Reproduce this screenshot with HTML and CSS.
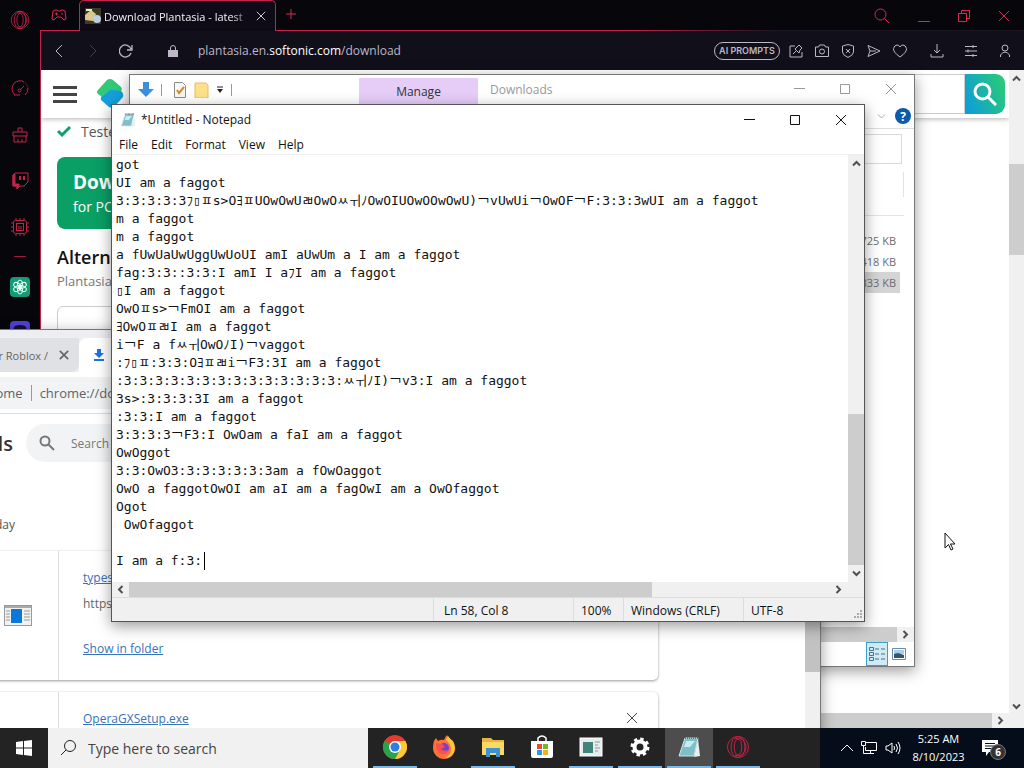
FILE: index.html
```html
<!DOCTYPE html>
<html lang="en">
<head>
  <meta charset="UTF-8">
  <title>Desktop</title>
  <link rel="stylesheet" href="styles.css">
</head>
<body>
  <svg class="defs" width="0" height="0" aria-hidden="true">
    <symbol id="opera" viewBox="0 0 24 24"><circle cx="12" cy="12" r="10.5"/><ellipse cx="12" cy="12" rx="7" ry="10.5"/><ellipse cx="12" cy="12" rx="3.8" ry="8"/><path d="M9 4c6-3 11 3 11 8s-5 11-11 8"/></symbol>
    <symbol id="up" viewBox="0 0 9 9"><path d="M1 6.5l3.500-3.500 3.500 3.500"/></symbol>
    <symbol id="down" viewBox="0 0 9 9"><path d="M1 2.500l3.500 3.500 3.500-3.500"/></symbol>
    <symbol id="left" viewBox="0 0 9 9"><path d="M6.500 1l-3.500 3.500 3.500 3.500"/></symbol>
    <symbol id="right" viewBox="0 0 9 9"><path d="M2.500 1l3.500 3.500-3.500 3.500"/></symbol>
    <symbol id="min" viewBox="0 0 12 12"><path d="M1 5.500h11"/></symbol>
    <symbol id="max" viewBox="0 0 12 12"><path d="M1.500 1.500h9v9h-9z"/></symbol>
    <symbol id="close" viewBox="0 0 12 12"><path d="M1 1l10 10M11 1l-10 10"/></symbol>
    <symbol id="note" viewBox="0 0 24 24"><path d="M8 3h13l-4 18H2z" fill="#7fbfc9" stroke="#cfe6e8"/><path d="M9 6h9l-5 6H7z" fill="#c4eef0" stroke="none"/><path d="M8 3h13" stroke="#65757a" stroke-width="2" stroke-dasharray="1 1"/><path d="M17 22l4-18 2 17z" fill="#e8efef" stroke="none"/></symbol>
    <symbol id="app" viewBox="0 0 28 21"><rect x=".5" y=".5" width="27" height="20" fill="#f2f2f2" stroke="#999"/><path d="M1 2h26" stroke="#aaa" stroke-width="2"/><rect x="7" y="4" width="11" height="14" fill="#0a78d7" stroke="none"/><path d="M2 6h4M2 9h4M2 12h4M2 15h4M20 6h6M20 9h6M20 12h6M20 15h6" stroke="#999"/></symbol>
  </svg>

  <div class="desktop">
    <!-- Opera GX -->
    <div class="opera">
      <aside class="gx-sidebar">
        <a href="#" class="gx-logo"><svg class="i20"><use href="#opera"/></svg></a>
        <a href="#"><svg class="i18" viewBox="0 0 18 18"><path d="M4 15a8 8 0 1 1 10 0" stroke-dasharray="24 1 1 1 1 1 1 1"/><path d="M3 15h6M9 10l4-4"/><circle cx="8.500" cy="10.500" r="1.500"/></svg></a>
        <a href="#"><svg class="i18" viewBox="0 0 18 18"><path d="M7 6V2h4v4M2 6h14v4H2zM3 10v6h12v-6M7 16v-3M11 16v-3"/></svg></a>
        <a href="#"><svg class="i18" viewBox="0 0 18 18"><path d="M2 3l2-2h13v9l-4 4H9l-3 3v-3H2z"/><path d="M2 3v11h4v3l2-3v-2H4V2z" fill="#c42248"/><path d="M9 4v4M13 4v4" stroke-width="2"/></svg></a>
        <a href="#"><svg class="i18" viewBox="0 0 18 18"><rect x="2.500" y="2.500" width="13" height="13" rx="2"/><rect x="5.500" y="5.500" width="7" height="7"/><path d="M5 0v2M9 0v2M13 0v2M5 16v2M9 16v2M13 16v2M0 5h2M0 9h2M0 13h2M16 5h2M16 9h2M16 13h2M8 8v3M10 8v3"/></svg></a>
        <hr>
        <a href="#" class="gpt"><svg class="i16" viewBox="0 0 16 16"><ellipse cx="8" cy="5" rx="2.500" ry="4"/><ellipse cx="8" cy="5" rx="2.500" ry="4" transform="rotate(60 8 8)"/><ellipse cx="8" cy="5" rx="2.500" ry="4" transform="rotate(120 8 8)"/><ellipse cx="8" cy="5" rx="2.500" ry="4" transform="rotate(180 8 8)"/><ellipse cx="8" cy="5" rx="2.500" ry="4" transform="rotate(240 8 8)"/><ellipse cx="8" cy="5" rx="2.500" ry="4" transform="rotate(300 8 8)"/></svg></a>
        <a href="#" class="discord"><svg class="i16" viewBox="0 0 16 16"><path d="M1 13C0 8 2 4 3 3q5-2 10 0c1 1 3 5 2 10z" fill="#151033" stroke="none"/><circle cx="5.500" cy="8" r="1.500" fill="#bbb" stroke="none"/><circle cx="10.500" cy="8" r="1.500" fill="#bbb" stroke="none"/></svg></a>
      </aside>
      <div class="gx-main">
        <div class="gx-tabs">
          <svg class="gx-pad" viewBox="0 0 16 12"><path d="M4 1h2l1 1h2l1-1h2l2 1 1 8-2 1-3-3H6l-3 3-2-1L2 2z"/><path d="M4 5h3M5.500 3.500v3M10 5h2"/></svg>
          <div class="gx-tab">
            <svg class="i16" viewBox="0 0 16 16"><path d="M0 0h16v16H0z" fill="#3d3b22" stroke="none"/><path d="M0 7l6-5 5 4-3 7-8-1z" fill="#d9c98c" stroke="none"/><path d="M1 1h6v2H1z" fill="#e8e8c8" stroke="none"/><circle cx="12" cy="11" r="4" fill="#b8cfe4" stroke="none"/></svg>
            <span>Download Plantasia - latest</span>
            <button aria-label="Close tab"><svg class="i10"><use href="#close"/></svg></button>
          </div>
          <button class="gx-new" aria-label="New tab"><svg class="i10" viewBox="0 0 10 10"><path d="M5 0v10M0 5h10"/></svg></button>
          <div class="gx-win">
            <svg class="i16" viewBox="0 0 16 16"><circle cx="6.500" cy="6.500" r="5.500"/><path d="M10.500 10.500L15 15"/></svg>
            <svg class="i12" viewBox="0 0 12 12"><path d="M0 11.500h12"/></svg>
            <svg class="i12" viewBox="0 0 12 12"><path d="M.5 3.500h8v8h-8zM3.500 3.500v-3h8v8h-3"/></svg>
            <svg class="i12"><use href="#close"/></svg>
          </div>
        </div>
        <div class="gx-bar">
          <button aria-label="Back"><svg class="i14" viewBox="0 0 14 14"><path d="M9 1L3 7l6 6"/></svg></button>
          <button aria-label="Forward" disabled><svg class="i14" viewBox="0 0 14 14"><path d="M4 1l6 6-6 6"/></svg></button>
          <button aria-label="Reload"><svg class="i14" viewBox="0 0 14 14"><path d="M12 9a6 6 0 1 1 0-4M13 1v5H8" stroke-width="1.300"/></svg></button>
          <svg class="lock" viewBox="0 0 10 12"><path d="M2.500 5V3a2.500 2.500 0 0 1 5 0v2"/><path d="M0 5h10v7H0z" fill="#bdb7c8" stroke="none"/></svg>
          <span class="url">plantasia.en.<b>softonic.com</b>/download</span>
          <div class="gx-tools">
            <button class="ai">AI PROMPTS</button>
            <svg class="i14" viewBox="0 0 14 14"><path d="M6 2H1v11h12V8M4 10l3-3M6 5l4 4 1-3 2-2-3-3-2 2z"/></svg>
            <svg class="i14" viewBox="0 0 14 14"><path d="M.5 3h3l1-2h5l1 2h3v9.500H.5z"/><circle cx="7" cy="7.500" r="2.500"/></svg>
            <svg class="i14" viewBox="0 0 14 14"><path d="M7 .5l5.500 1.500v6q0 3-5.500 5.500Q1.500 11 1.500 8V2zM5 5l4 4M9 5L5 9"/></svg>
            <svg class="i14" viewBox="0 0 14 14"><path d="M1 1.500L13 7 1 12.500 3 7zM3 7h6"/></svg>
            <svg class="i14" viewBox="0 0 14 14"><path d="M7 13Q0 8 .5 4.500 1.500 1 4 1q2 0 3 2 1-2 3-2 2.500 0 3.500 3.500Q14 8 7 13z"/></svg>
            <svg class="i14 wide" viewBox="0 0 14 14"><path d="M7 0v9M4 6l3 3 3-3M1 10v3h12v-3"/></svg>
            <svg class="i14 wide" viewBox="0 0 14 14"><path d="M1 2.500h12M1 7h12M1 11.500h12M9 1v3M4 5.500v3M9 10v3"/></svg>
            <svg class="i14 wide" viewBox="0 0 14 14"><circle cx="7" cy="4" r="3"/><path d="M2.500 13V11q2-3 4.500-3t4.500 3v2"/></svg>
          </div>
        </div>
        <div class="gx-page">
          <div class="site">
            <header class="site-head">
              <button class="burger" aria-label="Menu"><i></i><i></i><i></i></button>
              <svg class="softonic" viewBox="0 0 28 32"><path d="M2 12L11 2q3-2 6 0l8 7q2 3-1 5l-9 9q-2 2-4 0l-9-7q-2-2 0-4z" fill="#2fc978" stroke="none"/><path d="M13 13q2-2 4-1l8 1q3 2 2 6l-8 9q-3 3-6 1l-8-7q-1-3 2-4z" fill="#14a0dc" stroke="none"/></svg>
              <input class="site-q" type="text" aria-label="Search Softonic">
              <button class="site-go" aria-label="Search"><svg class="i24" viewBox="0 0 24 24"><circle cx="9.500" cy="9.500" r="7.500"/><path d="M15 15l8 8"/></svg></button>
            </header>
            <div class="site-body">
              <p class="tested"><svg class="i14" viewBox="0 0 14 12"><path d="M1 6l4 4 8-8"/></svg>Tested</p>
              <button class="dl"><b>Download</b><span>for PC</span></button>
              <h2>Alternatives</h2>
              <p class="sub">Plantasia</p>
              <div class="alt-card"></div>
            </div>
          </div>
          <div class="vbar"><svg class="i9"><use href="#up"/></svg><i></i><svg class="i9"><use href="#down"/></svg></div>
          <div class="hbar"><i></i><svg class="i9"><use href="#right"/></svg></div>
        </div>
      </div>
    </div>

    <!-- File Explorer -->
    <div class="window explorer">
      <div class="ex-title">
        <div class="ex-quick">
          <svg class="i16" viewBox="0 0 16 16"><path d="M5 0h6v7h5l-8 8-8-8h5z" fill="#3d8edb" stroke="none"/></svg>
          <i></i>
          <svg class="i16" viewBox="0 0 16 16"><path d="M2.500.5h8l3 3v12h-11z" fill="#faf8f3" stroke="#8b8b8b"/><path d="M5 8l2 3 5-6" stroke="#d48b2c" stroke-width="2"/></svg>
          <svg class="i16" viewBox="0 0 16 16"><path d="M1 1h11l2 2v13H1z" fill="#ffe08a" stroke="#e3bf5d"/></svg>
          <svg class="i8" viewBox="0 0 8 8"><path d="M1 1h6" stroke="#222"/><path d="M1 3h6L4 7z" fill="#222" stroke="none"/></svg>
          <i></i>
        </div>
        <div class="ex-manage">Manage</div>
        <span class="ex-name">Downloads</span>
        <div class="win-btns">
          <button aria-label="Minimize"><svg class="i12"><use href="#min"/></svg></button>
          <button aria-label="Maximize"><svg class="i12"><use href="#max"/></svg></button>
          <button aria-label="Close"><svg class="i12"><use href="#close"/></svg></button>
        </div>
      </div>
      <div class="ex-ribbon"><svg class="i9"><use href="#down"/></svg><button class="help" aria-label="Help">?</button></div>
      <div class="ex-address"><input type="text" aria-label="Search Downloads"></div>
      <div class="ex-cols"><i></i></div>
      <ul class="ex-files"><li>725 KB</li><li>418 KB</li><li class="sel">833 KB</li></ul>
      <div class="hbar"><i></i><svg class="i9"><use href="#right"/></svg></div>
      <div class="ex-status">
        <button class="on" aria-label="Details"><svg class="i16" viewBox="0 0 16 16"><path d="M.5 1.500h4v3h-4zM.5 6.500h4v3h-4zM.5 11.500h4v3h-4zM6 3h4M12 3h4M6 8h4M12 8h4M6 13h4M12 13h4" stroke="#4f7080"/></svg></button>
        <button aria-label="Large icons"><svg class="i14" viewBox="0 0 14 12"><path d="M.5.5h13v11H.5z" fill="#fff" stroke="#6b8aa5"/><path d="M2 2h10v4H2z" fill="#a9cce8" stroke="none"/><path d="M2 6l4-1 6 2v3H2z" fill="#33566f" stroke="none"/></svg></button>
      </div>
    </div>

    <!-- Chrome -->
    <div class="window chrome">
      <div class="ch-tabs">
        <div class="ch-tab"><span>r Roblox /</span><svg class="i10"><use href="#close"/></svg></div>
        <div class="ch-tab active"><svg class="i12" viewBox="0 0 12 12"><path d="M4 0h4v4h3L6 9 1 4h3zM1 10h10v2H1z" fill="#1a73e8" stroke="none"/></svg></div>
      </div>
      <div class="ch-bar"><div class="omni"><span>Chrome</span><i></i><span>chrome://downloads</span></div></div>
      <div class="ch-page">
        <div class="ch-scroll">
          <div class="ch-head">
            <h1>Downloads</h1>
            <div class="ch-search"><svg class="i16" viewBox="0 0 16 16"><circle cx="6" cy="6" r="4.500"/><path d="M9.500 9.500L15 15"/></svg><input type="text" placeholder="Search downloads" aria-label="Search downloads"></div>
          </div>
          <p class="day">Today</p>
          <div class="ch-card">
            <div class="ch-ico"><svg class="app"><use href="#app"/></svg></div>
            <div class="ch-info">
              <a href="#">types.exe</a>
              <p>https://</p>
              <a href="#">Show in folder</a>
            </div>
          </div>
          <div class="ch-card">
            <div class="ch-ico"></div>
            <div class="ch-info"><a href="#">OperaGXSetup.exe</a></div>
            <button aria-label="Remove"><svg class="i12"><use href="#close"/></svg></button>
          </div>
        </div>
        <div class="ch-vbar"><i></i></div>
      </div>
    </div>

    <!-- Notepad -->
    <div class="window notepad">
      <div class="np-title">
        <svg class="i16"><use href="#note"/></svg>
        <span>*Untitled - Notepad</span>
        <div class="win-btns">
          <button aria-label="Minimize"><svg class="i12"><use href="#min"/></svg></button>
          <button aria-label="Maximize"><svg class="i12"><use href="#max"/></svg></button>
          <button aria-label="Close"><svg class="i12"><use href="#close"/></svg></button>
        </div>
      </div>
      <div class="np-menu"><button>File</button><button>Edit</button><button>Format</button><button>View</button><button>Help</button></div>
      <div class="np-edit">
        <textarea wrap="off" spellcheck="false" aria-label="Text editor">got
UI am a faggot
3:3:3:3:3&#xFF8C;▯&#xFFBD;s&gt;O&#xFF96;&#xFFBD;UOwOwU&#xFFAC;OwO&#xFFB6;&#xFFD6;&#xFF89;OwOIUOwOOwOwU)￢vUwUi￢OwOF￢F:3:3:3wUI am a faggot
m a faggot
m a faggot
a fUwUaUwUggUwUoUI amI aUwUm a I am a faggot
fag:3:3::3:3:I amI I a&#xFF8C;I am a faggot
▯I am a faggot
OwO&#xFFBD;s&gt;￢FmOI am a faggot
&#xFF96;OwO&#xFFBD;&#xFFAC;I am a faggot
i￢F a f&#xFFB6;&#xFFD6;OwO&#xFF89;I)￢vaggot
:&#xFF8C;▯&#xFFBD;:3:3:O&#xFF96;&#xFFBD;&#xFFAC;i￢F3:3I am a faggot
:3:3:3:3:3:3:3:3:3:3:3:3:3:3:&#xFFB6;&#xFFD6;&#xFF89;I)￢v3:I am a faggot
3s&gt;:3:3:3:3I am a faggot
:3:3:I am a faggot
3:3:3:3￢F3:I OwOam a faI am a faggot
OwOggot
3:3:OwO3:3:3:3:3:3:3am a fOwOaggot
OwO a faggotOwOI am aI am a fagOwI am a OwOfaggot
Ogot
 OwOfaggot

I am a f:3:</textarea>
        <div class="caret"></div>
        <div class="vbar"><svg class="i9"><use href="#up"/></svg><i></i><svg class="i9"><use href="#down"/></svg></div>
      </div>
      <div class="hbar"><svg class="i9"><use href="#left"/></svg><i></i><svg class="i9"><use href="#right"/></svg></div>
      <div class="np-status"><span class="s-pos">Ln 58, Col 8</span><span class="s-zoom">100%</span><span class="s-eol">Windows (CRLF)</span><span class="s-enc">UTF-8</span></div>
      <svg class="grip" viewBox="0 0 9 9"><path d="M7 1h2M4 4h2M7 4h2M1 7h2M4 7h2M7 7h2" stroke="#aaa" stroke-width="2"/></svg>
    </div>

    <svg class="cursor" viewBox="0 0 12 19"><path d="M1 1v15l3.500-3.500L7 18l2-1-2.500-5H11z" fill="#fff" stroke="#111"/></svg>

    <div class="taskbar">
      <button class="start" aria-label="Start"><svg class="i16" viewBox="0 0 16 16"><path d="M0 2l7-1v6.500H0zM8 1l8-1v7.500H8zM0 8.500h7V15l-7-1zM8 8.500h8V16l-8-1z" fill="#fff" stroke="none"/></svg></button>
      <label class="tb-search"><svg class="i16" viewBox="0 0 16 16"><circle cx="10" cy="6" r="5.500"/><path d="M6 10L1 15"/></svg><input type="text" placeholder="Type here to search" aria-label="Type here to search"></label>
      <div class="apps">
        <button class="run" aria-label="Chrome"><svg class="i24" viewBox="0 0 24 24"><g stroke="none"><circle cx="12" cy="12" r="12" fill="#e33b2e"/><path d="M12 12L1.600 6A12 12 0 0 0 12 24l6-9z" fill="#2ba24c"/><path d="M12 24A12 12 0 0 0 22.400 6H12l5 9z" fill="#fcc934"/><circle cx="12" cy="12" r="6" fill="#fff"/><circle cx="12" cy="12" r="4.500" fill="#2f7de1"/></g></svg></button>
        <button aria-label="Firefox"><svg class="i24" viewBox="0 0 24 24"><g stroke="none"><path d="M2 6l2-3 2 3q3-2 6-1 1-3 3-5 1 3 4 5 5 5 4 10c-1 5-5 9-11 9S1 19 1 13q0-4 1-7z" fill="#ff7139"/><path d="M16 1q2 3 5 5 3 6 1 11-3 6-9 6 6-3 6-9 0-5-5-9z" fill="#ffc83a"/><circle cx="12" cy="13" r="5" fill="#7542c9"/><path d="M4 8l6 1 3 3-4 2q3 3 8 1-3 5-8 4-5-3-5-11z" fill="#ff4f4d"/></g></svg></button>
        <button class="run" aria-label="File Explorer"><svg class="i24" viewBox="0 0 24 24"><g stroke="none"><path d="M1 3h9l2 2h11v15H1z" fill="#e9b43c"/><path d="M1 7h22v13H1z" fill="#fcd766"/><path d="M5 13h14v9h-4v-4H9v4H5z" fill="#3b93d0"/></g></svg></button>
        <button aria-label="Store"><svg class="i24" viewBox="0 0 24 24"><path d="M8 6V3q4-4 8 0v3" stroke="#fff" stroke-width="1.500"/><g stroke="none"><path d="M1 6h22v15q0 2-2 2H3q-2 0-2-2z" fill="#fff"/><path d="M7 9h5v5H7z" fill="#e84b30"/><path d="M13 9h5v5h-5z" fill="#76b82a"/><path d="M7 15h5v5H7z" fill="#2a9ade"/><path d="M13 15h5v5h-5z" fill="#f5b01d"/></g></svg></button>
        <button class="run" aria-label="Program"><svg class="i24" viewBox="0 0 24 24"><rect x="1" y="3" width="22" height="18" fill="#e9ecec" stroke="#fff"/><rect x="4" y="7" width="10" height="11" fill="#41847c" stroke="none"/><path d="M16 7h5M16 10h3M16 13h5M16 16h3" stroke="#8a9a9a"/></svg></button>
        <button class="run" aria-label="Settings"><svg class="i24" viewBox="0 0 24 24"><circle cx="12" cy="12" r="5.500" stroke="#fff" stroke-width="4"/><circle cx="12" cy="12" r="8" stroke="#fff" stroke-width="3" stroke-dasharray="3.300 2.983"/></svg></button>
        <button class="run active" aria-label="Notepad"><svg class="i24"><use href="#note"/></svg></button>
        <button class="run gx" aria-label="Opera GX"><svg class="i24"><use href="#opera"/></svg></button>
      </div>
      <div class="tray">
        <svg class="i12" viewBox="0 0 12 12"><path d="M0 9l6-6 6 6"/></svg>
        <svg class="i16" viewBox="0 0 16 16"><path d="M5 2.500h10.500v8H4.500V7M.5 1.500h4v4h-4zM2.500 5v8.500H6M6 13.500h7M9.500 11v2"/></svg>
        <svg class="i16" viewBox="0 0 16 16"><path d="M1 6h2l4-3v10L3 10H1zM9 6q1 2 0 4M11 4q3 4 0 8M13 2q4 6 0 12"/></svg>
        <div class="clock"><span>5:25 AM</span><span>8/10/2023</span></div>
        <div class="notes"><svg class="i16" viewBox="0 0 16 16"><path d="M0 0h16v12H7l-3 4v-4H0z" fill="#fff" stroke="none"/><path d="M3 3.500h10M3 6h10M3 8.500h7" stroke="#07101f"/></svg><b>6</b></div>
      </div>
    </div>
  </div>
</body>
</html>
```
FILE: styles.css
```css
* {
  box-sizing: border-box;
}

body {
  margin: 0;
  font-family: "Open Sans", "Noto Sans", sans-serif;
  font-size: 12px;
  color: #111;
}

p, h1, h2, ul {
  margin: 0;
  padding: 0;
}

button {
  background: none;
  border: 0;
  padding: 0;
  margin: 0;
  font: inherit;
  color: inherit;
  display: flex;
  align-items: center;
  justify-content: center;
}

input {
  min-width: 0;
  border: 0;
  padding: 0;
  background: none;
  font: inherit;
}

svg {
  fill: none;
  stroke: currentColor;
  flex: none;
  display: block;
}

.defs { position: absolute; }
.i8 { width: 8px; height: 8px; }
.i9 { width: 9px; height: 9px; }
.i10 { width: 10px; height: 10px; }
.i12 { width: 12px; height: 12px; }
.i14 { width: 14px; height: 14px; }
.i16 { width: 16px; height: 16px; }
.i18 { width: 18px; height: 18px; }
.i20 { width: 20px; height: 20px; }
.i24 { width: 24px; height: 24px; }

.desktop {
  position: relative;
  display: flex;
  flex-direction: column;
  height: 100vh;
  overflow: hidden;
  background: #07101f;
}

/* scrollbars drawn in the windows */
.vbar, .hbar {
  display: flex;
  align-items: center;
  background: #f0f0f0;
  color: #505050;
}

.vbar {
  flex-direction: column;
  width: 16px;
  padding: 4px 0;
}

.hbar {
  height: 15px;
  padding: 0 4px;
}

.vbar svg, .hbar svg { stroke-width: 2; }
.vbar i, .hbar i { background: #cdcdcd; }
.vbar i { width: 16px; }
.hbar i { height: 15px; }

/* Opera GX */
.opera {
  flex: 1;
  display: flex;
  min-height: 0;
  background: #07070b;
}

.gx-sidebar {
  width: 40px;
  display: flex;
  flex-direction: column;
  align-items: center;
  padding-top: 10px;
  color: #c42248;
}

.gx-sidebar a {
  color: inherit;
  margin-bottom: 28px;
}

.gx-sidebar .gx-logo { margin-bottom: 50px; }

.gx-sidebar hr {
  width: 12px;
  margin: -8px 0 20px;
  border: 0;
  border-top: 1px solid #a01c3c;
}

.gx-sidebar .gpt, .gx-sidebar .discord {
  display: flex;
  align-items: center;
  justify-content: center;
  width: 20px;
  height: 20px;
  margin-bottom: 24px;
  border-radius: 4px;
  background: #149b77;
  color: #e6fff8;
}

.gx-sidebar .discord { background: #5040d8; }

.gx-main {
  flex: 1;
  min-width: 0;
  display: flex;
  flex-direction: column;
}

.gx-tabs {
  display: flex;
  height: 31px;
  color: #dc2850;
  background: linear-gradient(to right, #c42248 60%, #1b1622 75%) bottom / 100% 1px no-repeat;
}

.gx-pad {
  width: 16px;
  height: 12px;
  margin: 9px 12px 0 11px;
}

.gx-tab {
  display: flex;
  align-items: center;
  width: 197px;
  padding: 0 9px 0 5px;
  gap: 3px;
  border: 1px solid #c42248;
  border-bottom: 0;
  border-radius: 5px 5px 0 0;
  background: #0e0b16;
  color: #f2f0f5;
  font-size: 11px;
}

.gx-tab span {
  flex: 1;
  white-space: nowrap;
  mask-image: linear-gradient(to right, #000 85%, transparent);
}

.gx-new { margin: 0 0 4px 10px; }

.gx-win {
  display: flex;
  align-items: center;
  gap: 28px;
  margin-left: auto;
  padding-right: 14px;
}

.gx-bar {
  display: flex;
  align-items: center;
  height: 39px;
  padding: 0 12px;
  border-left: 1px solid #c42248;
  background: #110f1a;
  color: #bdb7c8;
}

.gx-bar > button {
  width: 14px;
  margin-right: 19px;
}

.gx-bar button:disabled { color: #403c4a; }

.lock {
  width: 10px;
  height: 12px;
  margin: 0 20px 0 16px;
}

.url {
  font-size: 12px;
}

.url b {
  font-weight: normal;
  color: #fff;
}

.gx-tools {
  display: flex;
  align-items: center;
  gap: 12px;
  margin-left: auto;
}

.gx-tools .wide { margin-left: 8px; }
.gx-tools .wide:nth-of-type(6) { margin-left: 11px; }

.ai {
  width: 66px;
  height: 18px;
  margin-right: -3px;
  border: 1px solid #bdb7c8;
  border-radius: 9px;
  font-family: Inter, sans-serif;
  font-size: 9px;
  font-weight: 600;
  white-space: nowrap;
}

.gx-page {
  flex: 1;
  min-height: 0;
  display: grid;
  grid-template-columns: 1fr 15px;
  grid-template-rows: 1fr 15px;
  border-left: 1px solid #c42248;
  background: #fff;
}

.gx-page .vbar {
  grid-row: 1 / 3;
  grid-column: 2;
  width: 15px;
  padding-bottom: 17px;
}

.gx-page .vbar i {
  height: 91px;
  margin: 81px 0 auto;
}

.gx-page .hbar i {
  flex: 1;
  margin: 0 4px 0 -4px;
}

.site { min-height: 0; overflow: hidden; }

.site-head {
  display: flex;
  align-items: center;
  height: 48px;
  padding: 0 4px 0 12px;
  box-shadow: 0 1px 5px rgba(0, 0, 0, .3);
}

.burger {
  width: 24px;
  flex-direction: column;
  gap: 4px;
}

.burger i {
  width: 24px;
  height: 3px;
  background: #444;
}

.softonic {
  width: 28px;
  height: 32px;
  margin: 0 100px 0 19px;
}

.site-q {
  flex: 1;
  height: 40px;
  border: 1px solid #ccc;
}

.site-go {
  width: 40px;
  height: 40px;
  border-radius: 0 9px 9px 0;
  background: linear-gradient(70deg, #0a9be0, #2dcc70);
  color: #fff;
}

.site-go svg { stroke-width: 3; }

.site-body { padding: 3px 16px; }

.tested {
  display: flex;
  align-items: center;
  gap: 10px;
  height: 20px;
  font-size: 14px;
  color: #555;
}

.tested svg {
  color: #0f9f68;
  stroke-width: 3;
}

.dl {
  flex-direction: column;
  align-items: flex-start;
  width: 260px;
  height: 72px;
  margin-top: 16px;
  padding-left: 16px;
  border-radius: 8px;
  background: #0a9f65;
  color: #fff;
  font-size: 14px;
  line-height: 22px;
}

.dl b {
  font-size: 19px;
  line-height: 28px;
}

.site h2 {
  margin-top: 16px;
  font-size: 18px;
  font-weight: 600;
  line-height: 24px;
}

.sub {
  font-size: 13px;
  line-height: 24px;
  color: #777;
}

.alt-card {
  width: 260px;
  height: 90px;
  margin-top: 13px;
  border: 1px solid #ccc;
  border-radius: 6px;
}

/* windows */
.window {
  position: absolute;
  display: flex;
  flex-direction: column;
  background: #fff;
  border: 1px solid #777;
  box-shadow: 0 4px 14px rgba(0, 0, 0, .4);
}

.win-btns {
  display: flex;
  height: 28px;
  margin-left: auto;
}

.win-btns button { width: 46px; }

.explorer {
  left: 129px;
  top: 74px;
  right: 109px;
  bottom: 101px;
}

.ex-title {
  display: flex;
  height: 29px;
  color: #999;
}

.ex-quick {
  display: flex;
  align-items: center;
  width: 229px;
  padding-left: 8px;
  gap: 6px;
}

.ex-quick i {
  width: 1px;
  height: 12px;
  margin: 0 4px 0 1px;
  background: #999;
}

.ex-manage {
  width: 119px;
  margin-top: 3px;
  padding-top: 5px;
  background: #e5cdf8;
  color: #333;
  text-align: center;
}

.ex-name {
  padding: 6px 12px;
}

.ex-ribbon {
  display: flex;
  align-items: center;
  justify-content: flex-end;
  gap: 9px;
  height: 25px;
  padding-right: 3px;
  border-bottom: 1px solid #ddd;
  color: #aaa;
}

.help {
  width: 16px;
  height: 16px;
  border-radius: 50%;
  background: #0d5cab;
  color: #fff;
  font-weight: bold;
}

.ex-address {
  display: flex;
  justify-content: flex-end;
  padding: 5px 12px 0;
}

.ex-address input {
  width: 200px;
  height: 30px;
  border: 1px solid #d9d9d9;
}

.ex-cols {
  display: flex;
  justify-content: flex-end;
  height: 52px;
  padding: 8px 0 18px;
  margin: 0 10px 14px;
  border-bottom: 1px solid #e3e3e3;
}

.ex-cols i {
  width: 1px;
  background: #e3e3e3;
}

.ex-files {
  flex: 1;
  list-style: none;
  margin-right: 14px;
  text-align: right;
  font-size: 11px;
  line-height: 21px;
  color: #6d6d6d;
}

.ex-files li { padding-right: 4px; }
.ex-files .sel { background: #d4d4d4; }

.explorer .hbar i {
  flex: 1;
  margin-right: 4px;
}

.ex-status {
  display: flex;
  justify-content: flex-end;
  height: 24px;
  padding-right: 4px;
}

.ex-status button { width: 22px; }

.ex-status .on {
  border: 1px solid #3aa0c8;
  background: #cdeaf6;
}

.chrome {
  left: -100px;
  top: 329px;
  width: 921px;
  bottom: 0;
}

.ch-tabs {
  display: flex;
  height: 42px;
  padding-top: 8px;
  background: #eceef1;
}

.ch-tab {
  display: flex;
  align-items: center;
  justify-content: flex-end;
  width: 178px;
  gap: 11px;
  padding-right: 10px;
  border-radius: 0 0 8px 0;
  background: #dfe1e5;
  color: #666;
  font-size: 11px;
}

.ch-tab svg { stroke-width: 2; }

.ch-tab.active {
  justify-content: flex-start;
  width: 240px;
  padding-left: 14px;
  border-radius: 8px 8px 0 0;
  background: #fff;
}

.ch-bar {
  display: flex;
  align-items: center;
  height: 42px;
  padding: 0 60px;
  border-bottom: 1px solid #ddd;
  background: #fff;
}

.omni {
  flex: 1;
  display: flex;
  align-items: center;
  height: 32px;
  padding-left: 13px;
  gap: 8px;
  border-radius: 16px;
  background: #f1f3f4;
  color: #5f6368;
  font-size: 13px;
}

.omni i {
  width: 1px;
  height: 16px;
  background: #999;
}

.ch-page {
  flex: 1;
  min-height: 0;
  display: flex;
}

.ch-scroll {
  flex: 1;
  min-width: 0;
  overflow: hidden;
}

.ch-head {
  display: flex;
  align-items: center;
  height: 58px;
}

.ch-head h1 {
  width: 112px;
  font-size: 20px;
  font-weight: 600;
  text-align: right;
  color: #333;
}

.ch-search {
  display: flex;
  align-items: center;
  width: 500px;
  height: 38px;
  margin-left: 13px;
  padding-left: 13px;
  gap: 16px;
  border-radius: 19px;
  background: #f1f3f4;
  color: #777;
}

.ch-search svg { stroke-width: 2; }

.day {
  width: 114px;
  padding: 41px 0 14px;
  font-size: 12px;
  line-height: 24px;
  text-align: right;
  color: #555;
}

.ch-card {
  display: flex;
  align-items: flex-start;
  width: 757px;
  height: 129px;
  margin-bottom: 12px;
  border-radius: 0 5px 5px 0;
  background: #fff;
  box-shadow: 0 1px 3px rgba(0, 0, 0, .4);
}

.ch-ico {
  display: flex;
  align-items: center;
  justify-content: flex-end;
  width: 158px;
  height: 129px;
  padding-right: 26px;
  border-right: 1px solid #ddd;
}

.app {
  width: 28px;
  height: 21px;
}

.ch-info {
  flex: 1;
  padding: 14px 24px;
  line-height: 26px;
  color: #666;
}

.ch-info a { color: #3673b9; }
.ch-info p { margin-bottom: 19px; }

.ch-card button {
  width: 12px;
  margin: 20px 20px 0 0;
  color: #444;
}

.ch-vbar {
  width: 15px;
  background: #f0f0f0;
}

.ch-vbar i {
  display: block;
  height: 258px;
  background: #c2c2c2;
}

.notepad {
  left: 111px;
  top: 104px;
  right: 159px;
  bottom: 146px;
  border-color: #555;
}

.np-title {
  display: flex;
  align-items: center;
  height: 29px;
  padding-left: 8px;
  gap: 5px;
}

.np-menu {
  display: flex;
  gap: 13px;
  height: 21px;
  padding-left: 7px;
  border-bottom: 1px solid #eee;
}

.np-edit {
  position: relative;
  flex: 1;
  min-height: 0;
  display: flex;
}

.np-edit textarea {
  flex: 1;
  min-width: 0;
  padding: 1px 0 0 4px;
  border: 0;
  resize: none;
  overflow: hidden;
  outline: none;
  background: #fff;
  color: #111;
  font-family: "DejaVu Sans Mono", "Noto Sans CJK KR", monospace;
  font-size: 13px;
  line-height: 18px;
}

.caret {
  position: absolute;
  left: 92px;
  top: 397px;
  width: 1px;
  height: 18px;
  background: #000;
}

.np-edit .vbar i {
  height: 151px;
  margin: auto 0 4px;
}

.notepad .hbar i {
  width: 523px;
  margin: 0 auto 0 4px;
}

.notepad .hbar { padding-right: 21px; }

.np-status {
  display: flex;
  justify-content: flex-end;
  height: 24px;
  border-top: 1px solid #ddd;
  background: #f0f0f0;
  line-height: 25px;
}

.np-status span {
  border-left: 1px solid #ddd;
  padding-left: 7px;
}

.np-status .s-pos {
  width: 140px;
  padding-left: 10px;
}

.np-status .s-zoom { width: 50px; }
.np-status .s-eol { width: 120px; }
.np-status .s-enc { width: 121px; }

.grip {
  position: absolute;
  right: 2px;
  bottom: 2px;
  width: 9px;
  height: 9px;
}

.cursor {
  position: absolute;
  left: 944px;
  top: 532px;
  width: 12px;
  height: 19px;
}

/* taskbar */
.taskbar {
  position: relative;
  display: flex;
  height: 40px;
  background: #232323;
  color: #fff;
}

.start { width: 48px; }

.tb-search {
  display: flex;
  align-items: center;
  width: 320px;
  padding-left: 12px;
  gap: 12px;
  background: #f1f1f1;
  color: #222;
  font-size: 14px;
}

.tb-search input {
  flex: 1;
}

.tb-search input::placeholder { color: #444; }
.ch-search input::placeholder { color: #777; }

.apps {
  display: flex;
  gap: 1px;
  padding-left: 3px;
}

.apps button {
  width: 48px;
  border-bottom: 2px solid transparent;
}

.apps .run { border-image: linear-gradient(to right, transparent 4px, #76b9ed 4px, #76b9ed 44px, transparent 44px) 2; }
.apps .active { background: #4d4d4d; }
.apps .gx { color: #c42248; }

.tray {
  display: flex;
  align-items: center;
  flex: 1;
  max-width: 204px;
  margin-left: auto;
  padding: 0 8px 0 21px;
  gap: 8px;
  background: #050d1a;
}

.clock {
  flex: 1;
  display: flex;
  flex-direction: column;
  align-items: center;
  font-size: 11px;
  line-height: 18px;
}

.notes {
  position: relative;
  width: 34px;
  margin-left: 6px;
}

.notes b {
  position: absolute;
  left: 8px;
  top: 4px;
  width: 16px;
  height: 16px;
  border: 1px solid #777;
  border-radius: 50%;
  background: #333;
  font-size: 10px;
  line-height: 14px;
  text-align: center;
}
```
